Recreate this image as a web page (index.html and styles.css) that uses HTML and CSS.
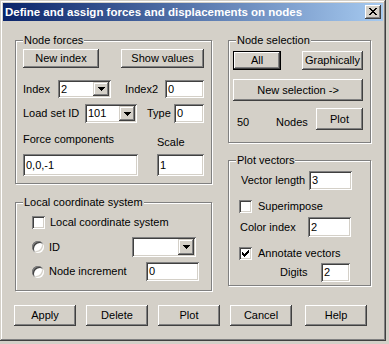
FILE: index.html
```html
<!DOCTYPE html>
<html>
<head>
<meta charset="utf-8">
<link rel="stylesheet" href="styles.css">
</head>
<body>
<div class="window">
  <div class="titlebar">
    <span class="title">Define and assign forces and displacements on nodes</span>
    <span class="close">
      <svg width="8" height="7" viewBox="0 0 8 7" shape-rendering="crispEdges">
        <rect x="0" y="0" width="2" height="1"/><rect x="6" y="0" width="2" height="1"/>
        <rect x="1" y="1" width="2" height="1"/><rect x="5" y="1" width="2" height="1"/>
        <rect x="2" y="2" width="4" height="1"/>
        <rect x="3" y="3" width="2" height="1"/>
        <rect x="2" y="4" width="4" height="1"/>
        <rect x="1" y="5" width="2" height="1"/><rect x="5" y="5" width="2" height="1"/>
        <rect x="0" y="6" width="2" height="1"/><rect x="6" y="6" width="2" height="1"/>
      </svg>
    </span>
  </div>
  <div class="body">
    <div class="columns">
      <div class="col col-left">
        <div class="group g-forces">
          <div class="legend">Node forces</div>
          <div class="row r-btns">
            <button class="btn b-newindex">New index</button>
            <button class="btn b-show">Show values</button>
          </div>
          <div class="row r-index">
            <span class="lbl l-index">Index</span>
            <div class="combo c-index"><span class="val">2</span><span class="drop"><svg width="7" height="4" viewBox="0 0 7 4" shape-rendering="crispEdges"><rect x="0" y="0" width="7" height="1"/><rect x="1" y="1" width="5" height="1"/><rect x="2" y="2" width="3" height="1"/><rect x="3" y="3" width="1" height="1"/></svg></span></div>
            <span class="lbl l-index2">Index2</span>
            <div class="edit e-index2">0</div>
          </div>
          <div class="row r-load">
            <span class="lbl l-load">Load set ID</span>
            <div class="combo c-load"><span class="val">101</span><span class="drop"><svg width="7" height="4" viewBox="0 0 7 4" shape-rendering="crispEdges"><rect x="0" y="0" width="7" height="1"/><rect x="1" y="1" width="5" height="1"/><rect x="2" y="2" width="3" height="1"/><rect x="3" y="3" width="1" height="1"/></svg></span></div>
            <span class="lbl l-type">Type</span>
            <div class="edit e-type">0</div>
          </div>
          <div class="row r-force">
            <div class="fcol fcol-force">
              <span class="lbl l-force">Force components</span>
              <div class="edit e-force">0,0,-1</div>
            </div>
            <div class="fcol fcol-scale">
              <span class="lbl l-scale">Scale</span>
              <div class="edit e-scale">1</div>
            </div>
          </div>
        </div>
        <div class="group g-local">
          <div class="legend">Local coordinate system</div>
          <div class="row r-check">
            <span class="checkbox"></span>
            <span class="lbl l-check">Local coordinate system</span>
          </div>
          <div class="row r-id">
            <span class="radio"></span>
            <span class="lbl l-id">ID</span>
            <div class="combo c-id"><span class="val"></span><span class="drop"><svg width="7" height="4" viewBox="0 0 7 4" shape-rendering="crispEdges"><rect x="0" y="0" width="7" height="1"/><rect x="1" y="1" width="5" height="1"/><rect x="2" y="2" width="3" height="1"/><rect x="3" y="3" width="1" height="1"/></svg></span></div>
          </div>
          <div class="row r-inc">
            <span class="radio"></span>
            <span class="lbl l-inc">Node increment</span>
            <div class="edit e-inc">0</div>
          </div>
        </div>
      </div>
      <div class="col col-right">
        <div class="group g-sel">
          <div class="legend">Node selection</div>
          <div class="row r-sel1">
            <button class="btn default b-all">All</button>
            <button class="btn b-graph">Graphically</button>
          </div>
          <div class="row r-sel2">
            <button class="btn b-newsel">New selection -&gt;</button>
          </div>
          <div class="row r-sel3">
            <span class="lbl l-50">50</span>
            <span class="lbl l-nodes">Nodes</span>
            <button class="btn b-plot">Plot</button>
          </div>
        </div>
        <div class="group g-vec">
          <div class="legend">Plot vectors</div>
          <div class="row r-vlen">
            <span class="lbl l-vlen">Vector length</span>
            <div class="edit e-vlen">3</div>
          </div>
          <div class="row r-super">
            <span class="checkbox"></span>
            <span class="lbl l-cb">Superimpose</span>
          </div>
          <div class="row r-color">
            <span class="lbl l-color">Color index</span>
            <div class="edit e-color">2</div>
          </div>
          <div class="row r-annot">
            <span class="checkbox checked"><svg width="7" height="7" viewBox="0 0 7 7" shape-rendering="crispEdges"><rect x="6" y="0" width="1" height="1"/><rect x="5" y="1" width="2" height="1"/><rect x="0" y="2" width="1" height="1"/><rect x="4" y="2" width="3" height="1"/><rect x="0" y="3" width="2" height="1"/><rect x="3" y="3" width="3" height="1"/><rect x="0" y="4" width="5" height="1"/><rect x="1" y="5" width="3" height="1"/><rect x="2" y="6" width="1" height="1"/></svg></span>
            <span class="lbl l-cb">Annotate vectors</span>
          </div>
          <div class="row r-digits">
            <span class="lbl l-digits">Digits</span>
            <div class="edit e-digits">2</div>
          </div>
        </div>
      </div>
    </div>
    <div class="row r-bottom">
      <button class="btn b-bottom">Apply</button>
      <button class="btn b-bottom">Delete</button>
      <button class="btn b-bottom">Plot</button>
      <button class="btn b-bottom">Cancel</button>
      <button class="btn b-bottom b-help">Help</button>
    </div>
  </div>
</div>
</body>
</html>
```
FILE: styles.css
```css
html, body {
  margin: 0;
  padding: 0;
  background: #D4D0C8;
}
body {
  font-family: "Liberation Sans", Arial, sans-serif;
  font-size: 11px;
  line-height: 13px;
  color: #000;
}
.window {
  width: 386px;
  height: 341px;
  box-sizing: border-box;
  padding: 3px;
  background: #D4D0C8;
  box-shadow: inset -1px -1px #404040, inset 1px 1px #D4D0C8, inset -2px -2px #808080, inset 2px 2px #fff;
}
.titlebar {
  height: 18px;
  background: linear-gradient(to right, #0A246A, #A6CAF0);
  display: flex;
  align-items: center;
  justify-content: space-between;
  padding: 0 2px 0 2px;
}
.title {
  color: #fff;
  font-weight: bold;
  font-size: 11.5px;
  white-space: nowrap;
}
.close {
  width: 16px;
  height: 14px;
  box-sizing: border-box;
  background: #D4D0C8;
  box-shadow: inset -1px -1px #404040, inset 1px 1px #fff, inset -2px -2px #808080, inset 2px 2px #D4D0C8;
  display: flex;
  align-items: center;
  justify-content: center;
  padding: 0 1px 1px 0;
}
.close svg { display: block; fill: #000; }
.body {
  padding: 19px 0 0 12px;
  display: flex;
  flex-direction: column;
}
.columns {
  display: flex;
  gap: 16px;
}
.col {
  display: flex;
  flex-direction: column;
}
.col-left { width: 197px; }
.col-right { width: 143px; }
.group {
  box-sizing: border-box;
  border: 1px solid #808080;
  box-shadow: inset 1px 1px #fff, 1px 1px #fff;
  display: flex;
  flex-direction: column;
}
.g-forces { height: 144px; }
.g-local { height: 89px; margin-top: 18px; }
.g-sel { height: 103px; }
.g-vec { height: 126px; margin-top: 17px; }
.legend {
  width: fit-content;
  height: 13px;
  margin: -7px 0 0 7px;
  padding: 0 1px;
  background: #D4D0C8;
  white-space: nowrap;
}
.row {
  display: flex;
  align-items: center;
}
.lbl {
  white-space: nowrap;
  flex: none;
}
.btn {
  font: inherit;
  color: #000;
  background: #D4D0C8;
  border: 0;
  margin: 0;
  padding: 0;
  box-sizing: border-box;
  flex: none;
  display: flex;
  align-items: center;
  justify-content: center;
  box-shadow: inset -1px -1px #404040, inset 1px 1px #fff, inset -2px -2px #808080, inset 2px 2px #D4D0C8;
}
.btn.default {
  box-shadow: inset 0 0 0 1px #000, inset -2px -2px #404040, inset 2px 2px #fff, inset -3px -3px #808080;
}
.edit {
  box-sizing: border-box;
  background: #fff;
  flex: none;
  padding-left: 3px;
  display: flex;
  align-items: center;
  box-shadow: inset 1px 1px #808080, inset -1px -1px #fff, inset 2px 2px #404040, inset -2px -2px #D4D0C8;
}
.combo {
  box-sizing: border-box;
  background: #fff;
  flex: none;
  display: flex;
  align-items: stretch;
  padding: 2px;
  box-shadow: inset 1px 1px #808080, inset -1px -1px #fff, inset 2px 2px #404040, inset -2px -2px #D4D0C8;
}
.combo .val {
  flex: 1;
  padding-left: 1px;
  display: flex;
  align-items: center;
}
.combo .drop {
  width: 16px;
  flex: none;
  background: #D4D0C8;
  box-shadow: inset -1px -1px #404040, inset 1px 1px #D4D0C8, inset -2px -2px #808080, inset 2px 2px #fff;
  display: flex;
  align-items: center;
  justify-content: center;
}
.drop svg { display: block; fill: #000; }
.checkbox {
  width: 13px;
  height: 13px;
  box-sizing: border-box;
  flex: none;
  background: #fff;
  box-shadow: inset 1px 1px #808080, inset -1px -1px #fff, inset 2px 2px #404040, inset -2px -2px #D4D0C8;
  display: flex;
  align-items: center;
  justify-content: center;
}
.checkbox svg { display: block; fill: #000; }
.radio {
  width: 12px;
  height: 12px;
  border-radius: 50%;
  flex: none;
  background: #fff;
  box-shadow: inset 1px 1px #808080, inset -1px -1px #fff, inset 2px 2px #404040, inset -2px -2px #D4D0C8;
}

/* Node forces */
.r-btns { margin-top: 2px; padding-left: 7px; }
.b-newindex { width: 76px; height: 19px; }
.b-show { width: 83px; height: 19px; margin-left: 22px; }
.r-index { margin-top: 12px; padding-left: 7px; }
.l-index { width: 35px; }
.c-index { width: 53px; height: 18px; }
.l-index2 { width: 40px; margin-left: 14px; }
.e-index2 { width: 39px; height: 18px; }
.r-load { margin-top: 6px; padding-left: 7px; }
.l-load { width: 62px; }
.c-load { width: 52px; height: 19px; }
.l-type { width: 27px; margin-left: 10px; }
.e-type { width: 30px; height: 19px; }
.r-force { align-items: flex-end; padding-left: 7px; margin-top: 10px; }
.fcol { display: flex; flex-direction: column; }
.e-force { width: 115px; height: 22px; margin-top: 8px; }
.fcol-scale { margin-left: 19px; }
.e-scale { width: 47px; height: 22px; margin-top: 5px; }

/* Local coordinate system */
.r-check { margin-top: 7px; padding-left: 16px; }
.l-check { margin-left: 5px; }
.r-id { margin-top: 8px; padding-left: 16px; height: 20px; }
.l-id { margin-left: 5px; width: 83px; }
.c-id { width: 64px; height: 20px; }
.r-inc { margin-top: 5px; padding-left: 16px; }
.l-inc { margin-left: 5px; width: 97px; }
.e-inc { width: 53px; height: 19px; }

/* Node selection */
.r-sel1 { margin-top: 4px; padding-left: 4px; }
.b-all { width: 48px; height: 19px; }
.b-graph { width: 61px; height: 19px; margin-left: 21px; }
.r-sel2 { margin-top: 9px; padding-left: 4px; }
.b-newsel { width: 130px; height: 22px; }
.r-sel3 { margin-top: 7px; padding-left: 8px; align-items: flex-end; }
.l-50 { width: 39px; margin-bottom: 1px; }
.l-nodes { width: 40px; margin-bottom: 1px; }
.b-plot { width: 47px; height: 22px; }

/* Plot vectors */
.r-vlen { margin-top: 4px; padding-left: 12px; }
.l-vlen { width: 68px; }
.e-vlen { width: 43px; height: 19px; }
.r-super { margin-top: 10px; padding-left: 10px; }
.l-cb { margin-left: 6px; }
.r-color { margin-top: 4px; padding-left: 11px; }
.l-color { width: 68px; }
.e-color { width: 43px; height: 20px; }
.r-annot { margin-top: 10px; padding-left: 10px; }
.r-digits { margin-top: 3px; padding-left: 51px; }
.l-digits { width: 41px; }
.e-digits { width: 29px; height: 19px; }

/* Bottom buttons */
.r-bottom { margin-top: 14px; margin-left: -1px; gap: 10px; }
.b-bottom { width: 62px; height: 21px; }
.b-help { margin-left: 3px; }
```
